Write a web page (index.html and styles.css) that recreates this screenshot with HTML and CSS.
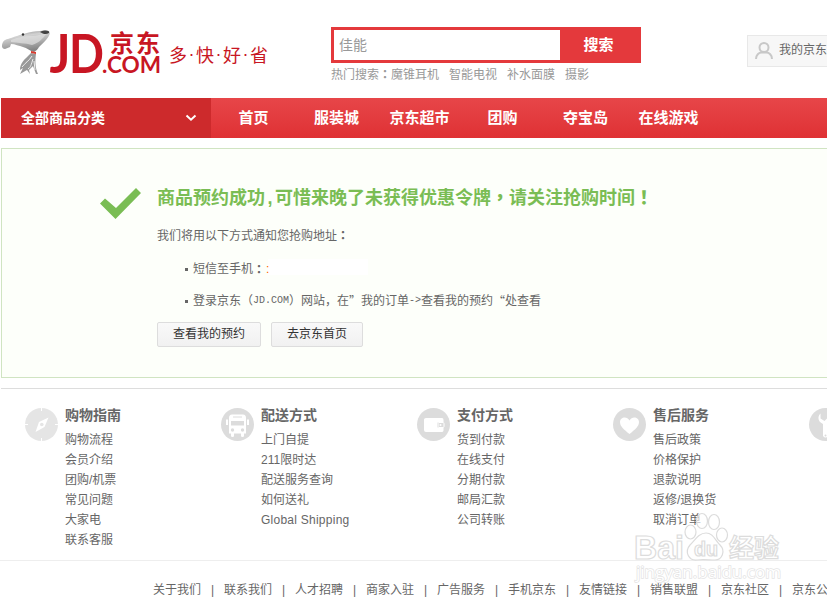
FILE: index.html
```html
<!DOCTYPE html>
<html lang="zh-CN">
<head>
<meta charset="utf-8">
<title>京东</title>
<link rel="stylesheet" href="styles.css">
</head>
<body>
<div class="page">
  <header class="header">
    <svg class="logo" width="164" height="52" viewBox="0 0 164 52">
      <defs>
        <linearGradient id="fur" x1="0" y1="0" x2="0.3" y2="1">
          <stop offset="0" stop-color="#777"/><stop offset="0.35" stop-color="#d2d2d2"/><stop offset="1" stop-color="#858585"/>
        </linearGradient>
      </defs>
      <path d="M3 13c2-3 5-3 8-4 9-3 19-7 29-7 5-1 10-1 10 2-1 5-6 9-11 14-1 2-3 4-5 5-4-1-7-4-11-5-4-1-8-3-12-3l-1 3-5 2c-3 0-4-3-2-7z" fill="url(#fur)"/>
      <path d="M11 11c8-3 13-4 21-4 5 0 9-2 15-3-5 7-9 10-15 12-7-2-14-2-21-3z" fill="#e0e0e0" opacity=".7"/>
      <path d="M40 3c4-2 10-2 9 1-3 2-6 1-9-1z" fill="#444"/>
      <circle cx="23" cy="5.500" r="1.200" fill="#333"/>
      <path d="M31 24l5 1c-1 7-1 13 2 20h-2l-3-8-4 4 1 4-3-4-7 4 3-6-3 2c0-7 4-10 11-17z" fill="#999"/>
      <path d="M32 27c-3 5-7 7-10 11m11-8c-2 6-2 8-5 10m6-8 1 9" stroke="#eee" fill="none"/>
      <path d="M31 22l5 1v2l-5-1z" fill="#d73b2f"/>
      <text y="44" class="logo-jd"><tspan x="49.500" textLength="21" lengthAdjust="spacingAndGlyphs">J</tspan><tspan x="69" textLength="35" lengthAdjust="spacingAndGlyphs">D</tspan></text>
      <text x="110" y="23" class="logo-cn" textLength="50">京东</text>
      <text x="102" y="44" class="logo-com" textLength="59" lengthAdjust="spacingAndGlyphs">.COM</text>
    </svg>
    <div class="slogan">多<i>·</i>快<i>·</i>好<i>·</i>省</div>
    <div class="search">
      <div class="search-box"><span class="search-input">佳能</span><span class="search-btn">搜索</span></div>
      <div class="hot"><span>热门搜索<b class="mid" lang="zh-TW">：</b>魔锥耳机</span><span>智能电视</span><span>补水面膜</span><span>摄影</span></div>
    </div>
    <div class="my-jd">
      <svg width="18" height="18" viewBox="0 0 18 18" fill="none" stroke="#c8c8c8" stroke-width="2"><circle cx="9" cy="5.500" r="4.500"/><path d="M1 17c0-4 3-6.500 5.500-6.500h5C14 10.500 17 13 17 17"/></svg>
      <span>我的京东</span>
    </div>
  </header>
  <nav class="nav">
    <div class="all"><span>全部商品分类</span>
      <svg width="12" height="8" viewBox="0 0 12 8"><path d="M1.500 1.500 6 5.700l4.500-4.200" fill="none" stroke="#fff" stroke-width="2"/></svg>
    </div>
    <div class="links"><a>首页</a><a>服装城</a><a>京东超市</a><a>团购</a><a>夺宝岛</a><a>在线游戏</a></div>
  </nav>
  <main class="result">
    <svg class="tick" width="42" height="32" viewBox="0 0 42 32"><path d="M0 15.500 5 10.500l11 9.500L36 0l5 5-25.500 26z" fill="#7abd54"/></svg>
    <div class="message">
      <h1>商品预约成功<span class="comma">,</span>可惜来晚了未获得优惠令牌<b class="mid" lang="zh-TW">，</b>请关注抢购时间<b class="mid" lang="zh-TW">！</b></h1>
      <p>我们将用以下方式通知您抢购地址<b class="mid" lang="zh-TW">：</b></p>
      <ul>
        <li>短信至手机<b class="mid" lang="zh-TW">：</b><span class="phone">:</span></li>
        <li>登录京东（<span class="mono">JD.COM</span>）网站，在<span class="quote">”</span>我的订单<span class="mono">-&gt;</span>查看我的预约<span class="quote open">“</span>处查看</li>
      </ul>
      <div class="buttons"><a>查看我的预约</a><a>去京东首页</a></div>
    </div>
  </main>
  <section class="service">
    <dl>
      <dt><svg width="33" height="33" viewBox="0 0 33 33"><circle cx="16.500" cy="16.500" r="16.500" fill="#e5e5e5"/><path d="M16.500 0v3M16.500 30v3M0 16.500h3M30 16.500h3" stroke="#fff"/><path d="M23.500 9.500 19.500 19l-9 5L14 14z" fill="#fff"/><circle cx="16.800" cy="16.500" r="1.800" fill="#e5e5e5"/></svg></dt>
      <dd><h2>购物指南</h2><a>购物流程</a><a>会员介绍</a><a>团购/机票</a><a>常见问题</a><a>大家电</a><a>联系客服</a></dd>
    </dl>
    <dl>
      <dt><svg width="33" height="33" viewBox="0 0 33 33"><circle cx="16.500" cy="16.500" r="16.500" fill="#dcdcdc"/><path d="M8 10q0-3.500 3-3.500h11q3 0 3 3.500v15.500h-2V28q0 1-1.500 1T20 28v-2.500h-7V28q0 1-1.500 1T10 28v-2.500H8zM5 11.500h2V17H5zM26 11.500h2V17h-2z" fill="#fff"/><path d="M12 9h9" stroke="#dcdcdc"/><path d="M10 13h13v4.500H10z" fill="#dcdcdc"/><circle cx="11.500" cy="22" r="1.700" fill="#dcdcdc"/><circle cx="21.500" cy="22" r="1.700" fill="#dcdcdc"/></svg></dt>
      <dd><h2>配送方式</h2><a>上门自提</a><a>211限时达</a><a>配送服务查询</a><a>如何送礼</a><a class="en">Global Shipping</a></dd>
    </dl>
    <dl>
      <dt><svg width="33" height="33" viewBox="0 0 33 33"><circle cx="16.500" cy="16.500" r="16.500" fill="#dcdcdc"/><path d="M7 11.500q0-1.500 2-1.500h16q1.500 0 1.500 2v2H22q-2 0-2 3t2 3h4.500v2.500q0 1.500-2 1.500H9q-2 0-2-2z" fill="#fff"/><rect x="21" y="14.500" width="6" height="5" rx="1" fill="none" stroke="#fff"/><circle cx="23.500" cy="17" r="1" fill="#fff"/></svg></dt>
      <dd><h2>支付方式</h2><a>货到付款</a><a>在线支付</a><a>分期付款</a><a>邮局汇款</a><a>公司转账</a></dd>
    </dl>
    <dl>
      <dt><svg width="33" height="33" viewBox="0 0 33 33"><circle cx="16.500" cy="16.500" r="16.500" fill="#dcdcdc"/><path d="M16.500 26C11 21.500 7 18.500 7 14c0-5 7-6.500 9.500-1.500C19 7.500 26 9 26 14c0 4.500-4 7.500-9.500 12z" fill="#fff"/></svg></dt>
      <dd><h2>售后服务</h2><a>售后政策</a><a>价格保护</a><a>退款说明</a><a>返修/退换货</a><a>取消订单</a></dd>
    </dl>
    <dl>
      <dt><svg width="33" height="33" viewBox="0 0 33 33"><circle cx="16.500" cy="16.500" r="16.500" fill="#dcdcdc"/><path d="M11.500 5.500v5l4 2.500 3-3V5.500c5 3 4 8 .5 10.500v12q-2.500 3-5 0V16c-5-2-6-7-2.500-10.500z" fill="#fff"/><circle cx="16.500" cy="27.500" r="1" fill="#dcdcdc"/></svg></dt>
    </dl>
  </section>
  <footer class="footer"><a>关于我们</a><i>|</i><a>联系我们</a><i>|</i><a>人才招聘</a><i>|</i><a>商家入驻</a><i>|</i><a>广告服务</a><i>|</i><a>手机京东</a><i>|</i><a>友情链接</a><i>|</i><a>销售联盟</a><i>|</i><a>京东社区</a><i>|</i><a>京东公益</a></footer>
</div>
<svg class="watermark" width="154" height="76" viewBox="0 0 154 76">
  <g fill="#fff" fill-opacity=".6" stroke="#dcdcdc" stroke-width="1.200">
    <text x="3" y="48" class="wm-main" textLength="50" lengthAdjust="spacingAndGlyphs">Bai</text>
    <path d="M75 22c7 0 9 7 14 12 6 6 2 15-5 15-6 0-12-1-18 0-8 1-13-8-7-15 5-5 9-12 16-12z"/>
    <ellipse cx="59.500" cy="21" rx="5.500" ry="7"/><ellipse cx="71" cy="10" rx="5.500" ry="7.500"/><ellipse cx="83" cy="11" rx="5.500" ry="7.500"/><ellipse cx="91" cy="24" rx="5.500" ry="7"/>
    <text x="63" y="45" class="wm-du" textLength="24" lengthAdjust="spacingAndGlyphs">du</text>
    <text x="98" y="46" class="wm-cn" textLength="50">经验</text>
  </g>
  <text x="5" y="67" class="wm-url" textLength="145" lengthAdjust="spacingAndGlyphs">jingyan.baidu.com</text>
</svg>
</body>
</html>
```
FILE: styles.css
```css
* { box-sizing: border-box; }
body {
  margin: 0;
  width: 827px;
  height: 601px;
  overflow: hidden;
  position: relative;
  background: #fff;
  color: #666;
  font: 12px/20px "Liberation Sans", "Noto Sans CJK SC", sans-serif;
}
h1, h2, p, ul, dl, dd { margin: 0; padding: 0; }
i { font-style: normal; }
svg { display: block; flex: none; }
.page { width: 827px; height: 601px; overflow: hidden; }
.mid { font-family: "Noto Sans CJK TC", sans-serif; line-height: 1; }

.header { display: flex; align-items: flex-start; height: 98px; }
.logo { margin-top: 29px; }
.logo-jd { font: 700 54px Lato, sans-serif; fill: #c81623; }
.logo-cn { font: 700 24px "Noto Sans CJK SC", sans-serif; fill: #c81623; }
.logo-com { font: 700 22.5px Lato, sans-serif; fill: #c81623; }
.slogan {
  display: flex;
  flex: none;
  width: 167px;
  padding: 40px 0 0 5px;
  color: #c81623;
  font: 18px/28px "Noto Sans CJK SC", sans-serif;
}
.slogan i { width: 9px; text-align: center; font-family: "Liberation Sans", sans-serif; }
.search { flex: none; width: 416px; padding-top: 27px; }
.search-box { display: flex; width: 310px; height: 36px; border: 3px solid #e4393c; background: #e4393c; }
.search-input { width: 226px; padding-left: 5px; background: #fff; color: #999; font-size: 14px; line-height: 30px; }
.search-btn { flex: 1; padding-right: 1px; text-align: center; color: #fff; font-size: 15px; font-weight: 700; line-height: 29px; }
.hot { display: flex; gap: 10px; color: #999; line-height: 24px; }
.my-jd {
  display: flex;
  flex: none;
  align-items: center;
  gap: 6px;
  width: 120px;
  height: 32px;
  margin-top: 35px;
  padding: 0 0 2px 7px;
  border: 1px solid #e8e8e8;
  background: #f7f7f7;
}
.my-jd svg { margin-top: 2px; }

.nav { display: flex; height: 40px; margin-left: 1px; background: linear-gradient(#e74649, #df3134); color: #fff; font-weight: 700; line-height: 40px; }
.all { display: flex; justify-content: space-between; align-items: center; width: 210px; padding: 0 14px 0 20px; background: #cd2a2c; font-size: 14px; line-height: 38px; }
.links { display: grid; grid-template-columns: repeat(6, 83px); margin-left: 1px; font-size: 15px; text-align: center; }

.result { display: flex; gap: 15px; height: 230px; margin: 10px 0 0 1px; padding: 34px 0 0 98px; border: 1px solid #d0e4c2; border-right: 0; background: #fdfffa; }
.tick { margin-top: 5px; }
h1 { height: 29px; color: #7abd54; font-size: 18px; line-height: 30px; white-space: nowrap; }
.comma { display: inline-block; width: 10px; text-align: center; }
.message p { height: 20px; margin-top: 14px; }
ul { margin: 13px 0 0 28px; list-style: none; }
li { display: flex; height: 20px; margin-bottom: 12px; white-space: pre; }
li .mid { line-height: 20px; }
li::before { content: ""; width: 3px; height: 3px; margin: 9px 5px 0 0; background: #666; }
.phone { width: 104px; padding-left: 1px; color: #f60; background: linear-gradient(#fff, #fff) 3px 0 / 100px 16px no-repeat; }
.mono { font: 10px/20px "Liberation Mono", monospace; }
.quote { width: 12px; font-family: "Noto Sans CJK SC", sans-serif; }
.open { text-align: right; }
.buttons { display: flex; gap: 10px; margin-top: -1px; }
.buttons a { width: 104px; height: 25px; border: 1px solid #ddd; border-radius: 2px; background: linear-gradient(#f9f9f9, #f1f1f1); color: #333; line-height: 23px; text-align: center; }
.buttons a + a { width: 92px; }

.service { display: flex; height: 172px; margin: 10px 0 0 1px; padding: 17px 0 0 24px; border-top: 1px solid #ddd; }
dl { display: flex; flex: none; gap: 7px; width: 196px; }
dt { padding-top: 2px; }
dd a { display: block; }
h2 { margin-bottom: 6px; font-size: 14px; line-height: 18px; }
.en { letter-spacing: .25px; }

.footer { display: flex; padding: 19px 0 0 153px; border-top: 1px solid #eee; }
.footer a { flex: none; width: 48px; white-space: nowrap; }
.footer i { flex: none; width: 23px; text-align: center; }

.watermark { position: absolute; left: 631px; top: 511px; }
.wm-main { font: 700 33px "Liberation Sans", sans-serif; }
.wm-du { font: 700 20px "Liberation Sans", sans-serif; }
.wm-cn { font: 700 25px "Noto Sans CJK SC", sans-serif; }
.wm-url { font: 17px "Open Sans", sans-serif; fill: #fff; stroke: #e4e4e4; stroke-width: 1.5px; paint-order: stroke; }
```
